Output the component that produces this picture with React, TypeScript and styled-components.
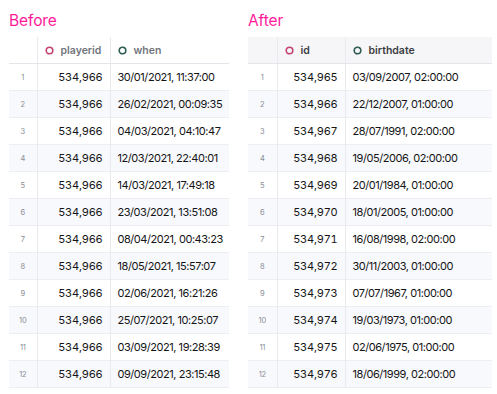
import styled, { createGlobalStyle } from "styled-components";

type Column = { name: string; color: string; width: number };
type Panel = {
  title: string;
  shaded: boolean;
  rowWidth: number;
  columns: Column[];
  rows: [string, string][];
};

const panels: Panel[] = [
  {
    title: "Before",
    shaded: false,
    rowWidth: 28,
    columns: [
      { name: "playerid", color: "#c2456f", width: 73 },
      { name: "when", color: "#2e5c52", width: 119 },
    ],
    rows: [
      ["534,966", "30/01/2021, 11:37:00"],
      ["534,966", "26/02/2021, 00:09:35"],
      ["534,966", "04/03/2021, 04:10:47"],
      ["534,966", "12/03/2021, 22:40:01"],
      ["534,966", "14/03/2021, 17:49:18"],
      ["534,966", "23/03/2021, 13:51:08"],
      ["534,966", "08/04/2021, 00:43:23"],
      ["534,966", "18/05/2021, 15:57:07"],
      ["534,966", "02/06/2021, 16:21:26"],
      ["534,966", "25/07/2021, 10:25:07"],
      ["534,966", "03/09/2021, 19:28:39"],
      ["534,966", "09/09/2021, 23:15:48"],
    ],
  },
  {
    title: "After",
    shaded: true,
    rowWidth: 29,
    columns: [
      { name: "id", color: "#c2456f", width: 68 },
      { name: "birthdate", color: "#2e5c52", width: 147 },
    ],
    rows: [
      ["534,965", "03/09/2007, 02:00:00"],
      ["534,966", "22/12/2007, 01:00:00"],
      ["534,967", "28/07/1991, 02:00:00"],
      ["534,968", "19/05/2006, 02:00:00"],
      ["534,969", "20/01/1984, 01:00:00"],
      ["534,970", "18/01/2005, 01:00:00"],
      ["534,971", "16/08/1998, 02:00:00"],
      ["534,972", "30/11/2003, 01:00:00"],
      ["534,973", "07/07/1967, 01:00:00"],
      ["534,974", "19/03/1973, 01:00:00"],
      ["534,975", "02/06/1975, 01:00:00"],
      ["534,976", "18/06/1999, 02:00:00"],
    ],
  },
];

function Ring({ color }: { color: string }) {
  return (
    <svg width="9" height="9" viewBox="0 0 9 9">
      <circle cx="4.5" cy="4.5" r="3.3" fill="none" stroke={color} strokeWidth="1.6" />
    </svg>
  );
}

function DataPanel({ panel }: { panel: Panel }) {
  const total = panel.rowWidth + panel.columns.reduce((s, c) => s + c.width, 0);
  return (
    <Section>
      <Title>{panel.title}</Title>
      <Table style={{ width: total }}>
        <colgroup>
          <col style={{ width: panel.rowWidth }} />
          {panel.columns.map((c) => (
            <col key={c.name} style={{ width: c.width }} />
          ))}
        </colgroup>
        <thead>
          <tr>
            <HeadCell $shaded={panel.shaded} />
            {panel.columns.map((c) => (
              <HeadCell key={c.name} $shaded={panel.shaded}>
                <HeadLabel $shaded={panel.shaded}>
                  <Ring color={c.color} />
                  {c.name}
                </HeadLabel>
              </HeadCell>
            ))}
          </tr>
        </thead>
        <tbody>
          {panel.rows.map((r, i) => (
            <Row key={i} $odd={i % 2 === 1}>
              <IndexCell>{i + 1}</IndexCell>
              <NumCell>{r[0]}</NumCell>
              <DateCell>{r[1]}</DateCell>
            </Row>
          ))}
        </tbody>
      </Table>
    </Section>
  );
}

export default function App() {
  return (
    <>
      <GlobalStyle />
      <Page>
        {panels.map((p) => (
          <DataPanel key={p.title} panel={p} />
        ))}
      </Page>
    </>
  );
}

const GlobalStyle = createGlobalStyle`
  body {
    margin: 0;
    background: #ffffff;
    font-family: Inter, "Liberation Sans", sans-serif;
  }
`;

const Page = styled.div`
  display: flex;
  gap: 19px;
  padding: 11px 0 0 9px;
`;

const Section = styled.div`
  display: flex;
  flex-direction: column;
`;

const Title = styled.div`
  color: #ff1a9c;
  font-size: 15.5px;
  line-height: 20px;
  height: 26px;
  letter-spacing: -0.1px;
`;

const Table = styled.table`
  border-collapse: collapse;
  table-layout: fixed;
  font-size: 11px;
  letter-spacing: -0.2px;
  color: #141416;
`;

const HeadCell = styled.th<{ $shaded: boolean }>`
  height: 26px;
  padding: 0 7px;
  background: ${(p) => (p.$shaded ? "#f6f6f8" : "#ffffff")};
  border-right: 1px solid #e9eaee;
  border-bottom: 1px solid #e4e5ea;
  text-align: left;
  &:last-child {
    border-right: none;
  }
`;

const HeadLabel = styled.span<{ $shaded: boolean }>`
  display: flex;
  align-items: center;
  gap: 7px;
  font-size: 10.5px;
  font-weight: 600;
  letter-spacing: 0;
  color: ${(p) => (p.$shaded ? "#3b3d42" : "#72757c")};
`;

const Row = styled.tr<{ $odd: boolean }>`
  height: 27px;
  background: ${(p) => (p.$odd ? "#f8f9fc" : "#ffffff")};
  border-bottom: 1px solid #eceef2;
`;

const IndexCell = styled.td`
  font-size: 7.5px;
  color: #8a8d94;
  text-align: center;
  border-right: 1px solid #e9eaee;
  padding: 0;
`;

const NumCell = styled.td`
  text-align: right;
  padding: 0 7px 0 0;
  border-right: 1px solid #e9eaee;
  white-space: nowrap;
  font-variant-numeric: tabular-nums;
`;

const DateCell = styled.td`
  padding: 0 0 0 7px;
  white-space: nowrap;
  letter-spacing: -0.45px;
`;
